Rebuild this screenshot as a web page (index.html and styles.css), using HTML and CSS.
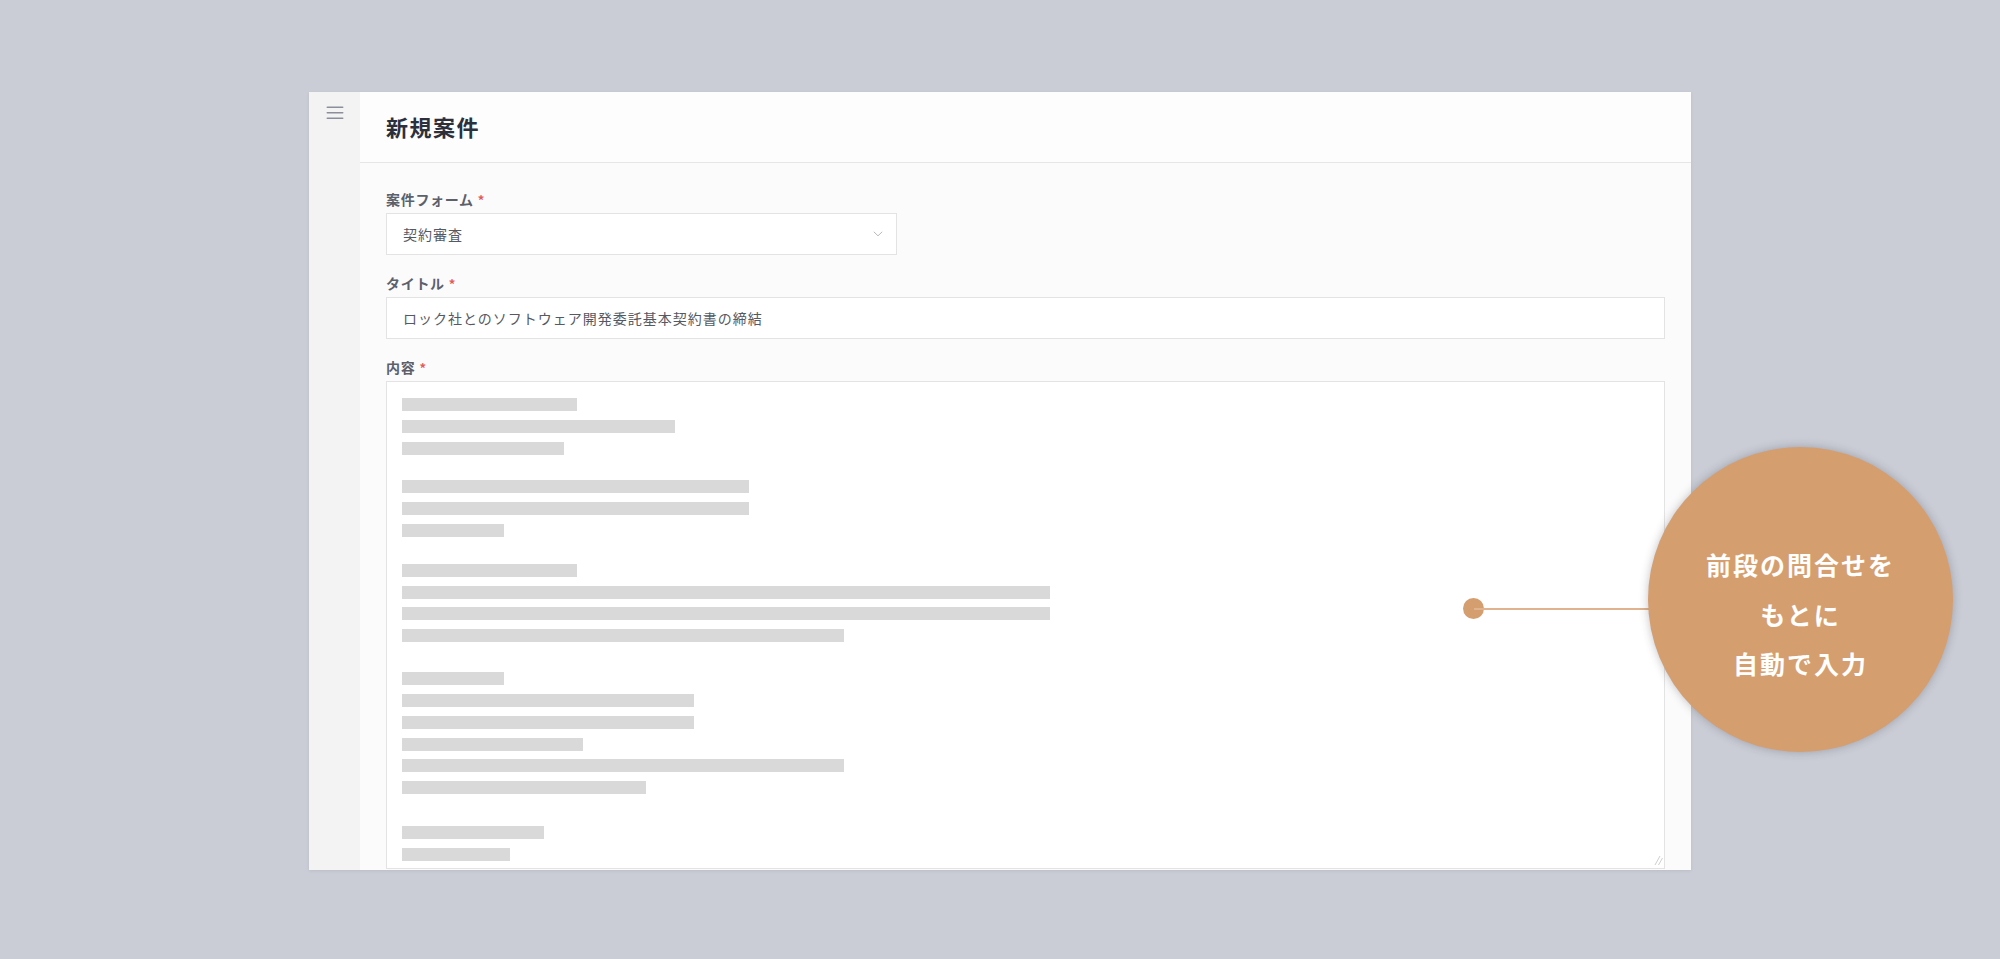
FILE: index.html
```html
<!DOCTYPE html>
<html>
<head>
  <meta charset="utf-8">
  <title>新規案件</title>
  <link rel="stylesheet" href="styles.css">
</head>
<body>

<div class="page">
  <div class="card">
    <aside class="sidebar">
      <svg class="menu-icon" width="18" height="14" viewBox="0 0 18 14">
        <rect x="0.5" y="0.5" width="17" height="1.6" rx="0.8"/>
        <rect x="0.5" y="6" width="17" height="1.6" rx="0.8"/>
        <rect x="0.5" y="11.5" width="17" height="1.6" rx="0.8"/>
      </svg>
    </aside>

    <main class="main">
      <header class="header">
        <h1 class="page-title">新規案件</h1>
      </header>

      <div class="form">
        <div class="field">
          <label class="label">案件フォーム<span class="req">*</span></label>
          <div class="select">
            <span>契約審査</span>
            <svg class="chevron" width="10" height="6" viewBox="0 0 10 6">
              <path d="M0.8 0.8 L5 4.8 L9.2 0.8" fill="none" stroke="#b8b8b8" stroke-width="1"/>
            </svg>
          </div>
        </div>

        <div class="field">
          <label class="label">タイトル<span class="req">*</span></label>
          <div class="input">ロック社とのソフトウェア開発委託基本契約書の締結</div>
        </div>

        <div class="field">
          <label class="label">内容<span class="req">*</span></label>
          <div class="textarea">
            <div class="para">
              <div class="bar w1"></div>
              <div class="bar w2"></div>
              <div class="bar w3"></div>
            </div>
            <div class="para">
              <div class="bar w4"></div>
              <div class="bar w4"></div>
              <div class="bar w6"></div>
            </div>
            <div class="para">
              <div class="bar w1"></div>
              <div class="bar w8"></div>
              <div class="bar w8"></div>
              <div class="bar w10"></div>
            </div>
            <div class="para">
              <div class="bar w6"></div>
              <div class="bar w12"></div>
              <div class="bar w12"></div>
              <div class="bar w14"></div>
              <div class="bar w10"></div>
              <div class="bar w16"></div>
            </div>
            <div class="para">
              <div class="bar w17"></div>
              <div class="bar w18"></div>
            </div>
            <svg class="grip" width="9" height="11" viewBox="0 0 9 11">
              <path d="M1 10 L6 1 M4.5 10 L8.5 3" stroke="#cfcfcf" stroke-width="1"/>
            </svg>
          </div>
        </div>
      </div>
    </main>
  </div>

  <div class="callout">
    <span class="dot"></span>
    <span class="line"></span>
    <div class="bubble">
      <p>前段の問合せを</p>
      <p>もとに</p>
      <p>自動で入力</p>
    </div>
  </div>
</div>

</body>
</html>
```

FILE: styles.css
```css
body {
  margin: 0;
  background-color: #cacdd5;
  font-family: "Noto Sans CJK JP", "Noto Sans", sans-serif;
}
.page {
  position: relative;
  width: 2000px;
  height: 959px;
  padding: 92px 0 0 309px;
  box-sizing: border-box;
}
.card {
  display: flex;
  width: 1382px;
  height: 778px;
  background-color: #fbfbfb;
  overflow: hidden;
  box-shadow: 0 1px 3px rgba(0, 0, 0, 0.08);
}
.sidebar {
  width: 51px;
  flex-shrink: 0;
  background-color: #f3f3f3;
  display: flex;
  justify-content: center;
  padding-top: 14px;
  box-sizing: border-box;
}
.menu-icon { fill: #8b8f9b; }
.main {
  flex: 1;
  display: flex;
  flex-direction: column;
}
.header {
  height: 71px;
  box-sizing: border-box;
  border-bottom: 1px solid #e6e6e6;
  display: flex;
  align-items: center;
  padding: 0 0 2px 26px;
  background-color: #fdfdfd;
}
.page-title {
  margin: 0;
  font-size: 22px;
  font-weight: 700;
  letter-spacing: 1.5px;
  color: #2c303d;
}
.form { padding: 27px 26px 0; }
.field + .field { margin-top: 19px; }
.label {
  display: block;
  height: 18px;
  line-height: 18px;
  font-size: 14px;
  font-weight: 700;
  letter-spacing: 0.05em;
  color: #5c606b;
  margin-bottom: 5px;
}
.req {
  color: #e25a5a;
  margin-left: 4px;
  font-size: 13px;
}
.select, .input {
  height: 42px;
  box-sizing: border-box;
  border: 1px solid #e3e3e3;
  background-color: #fff;
  display: flex;
  align-items: center;
  padding-left: 16px;
  font-size: 14px;
  letter-spacing: 1px;
  color: #555963;
}
.select {
  width: 511px;
  justify-content: space-between;
  padding-right: 13px;
}
.textarea {
  position: relative;
  height: 488px;
  box-sizing: border-box;
  border: 1px solid #e3e3e3;
  background-color: #fff;
  padding: 16px 15px;
}
.para {
  display: flex;
  flex-direction: column;
  gap: 8.75px;
}
.para:nth-child(2) { margin-top: 25.6px; }
.para:nth-child(3) { margin-top: 27.3px; }
.para:nth-child(4) { margin-top: 30.3px; }
.para:nth-child(5) { margin-top: 32.3px; }
.bar {
  height: 13px;
  background-color: #d9d9d9;
}
.w1 { width: 175px; }
.w2 { width: 273px; }
.w3 { width: 162px; }
.w4 { width: 347px; }
.w6 { width: 102px; }
.w8 { width: 648px; }
.w10 { width: 442px; }
.w12 { width: 292px; }
.w14 { width: 181px; }
.w16 { width: 244px; }
.w17 { width: 142px; }
.w18 { width: 108px; }
.grip {
  position: absolute;
  right: 1px;
  bottom: 2px;
}
.callout {
  position: absolute;
  left: 1463px;
  top: 447px;
  width: 492px;
  height: 306px;
}
.dot {
  position: absolute;
  left: 0;
  top: 151px;
  width: 21px;
  height: 21px;
  border-radius: 50%;
  background-color: #d59e6f;
}
.line {
  position: absolute;
  left: 11px;
  top: 161px;
  width: 180px;
  height: 1.5px;
  background-color: #e0b38e;
}
.bubble {
  position: absolute;
  left: 185px;
  top: 0;
  width: 305px;
  height: 305px;
  border-radius: 50%;
  background-color: #d59e6f;
  box-shadow: 0 0 10px rgba(40, 40, 60, 0.28);
  display: flex;
  flex-direction: column;
  align-items: center;
  justify-content: center;
  padding-top: 30px;
  box-sizing: border-box;
}
.bubble p {
  margin: 0;
  line-height: 49.5px;
  font-size: 25px;
  font-weight: 700;
  letter-spacing: 2px;
  color: #fff;
}
```
